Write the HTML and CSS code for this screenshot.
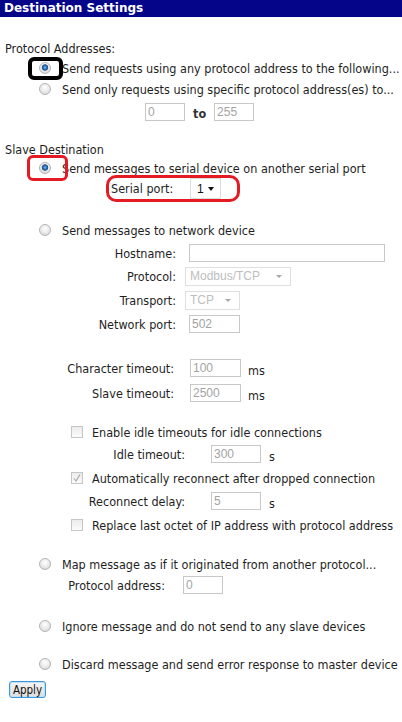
FILE: index.html
```html
<!DOCTYPE html>
<html lang="en">
<head>
    <meta charset="UTF-8">
    <meta name="viewport" content="width=device-width, initial-scale=1.0">
    <title>Destination Settings</title>
    <link rel="stylesheet" href="styles.css">
</head>
<body>
    <div class="titlebar">Destination Settings</div>

    <form class="settings">
        <!-- Protocol addresses -->
        <div class="row heading first">Protocol Addresses:</div>
        <label class="row opt flush">
            <input type="radio" name="addr" checked>
            <span>Send requests using any protocol address to the following...</span>
            <span class="mark mark-black"></span>
        </label>
        <label class="row opt near">
            <input type="radio" name="addr">
            <span>Send only requests using specific protocol address(es) to...</span>
        </label>
        <div class="row range">
            <input type="text" class="txt w40" value="0" disabled>
            <span class="to">to</span>
            <input type="text" class="txt w40" value="255" disabled>
        </div>

        <!-- Slave destination -->
        <div class="row heading second">Slave Destination</div>
        <label class="row opt flush">
            <input type="radio" name="dest" checked>
            <span>Send messages to serial device on another serial port</span>
            <span class="mark mark-red-radio"></span>
        </label>
        <div class="row field serial flush">
            <span class="lbl">Serial port:</span>
            <span class="select">
                <select class="sel-port"><option>1</option><option>2</option></select>
            </span>
            <span class="mark mark-red-port"></span>
        </div>

        <label class="row opt block">
            <input type="radio" name="dest">
            <span>Send messages to network device</span>
        </label>
        <div class="row field net">
            <span class="lbl">Hostname:</span>
            <input type="text" class="txt w196" value="">
        </div>
        <div class="row field net">
            <span class="lbl">Protocol:</span>
            <span class="select off">
                <select class="sel-proto" disabled><option>Modbus/TCP</option></select>
            </span>
        </div>
        <div class="row field net loose">
            <span class="lbl">Transport:</span>
            <span class="select off">
                <select class="sel-trans" disabled><option>TCP</option></select>
            </span>
        </div>
        <div class="row field net loose">
            <span class="lbl">Network port:</span>
            <input type="text" class="txt w51" value="502" disabled>
        </div>

        <div class="row field timeout wide">
            <span class="lbl">Character timeout:</span>
            <input type="text" class="txt w51" value="100" disabled>
            <span class="unit">ms</span>
        </div>
        <div class="row field timeout spread">
            <span class="lbl">Slave timeout:</span>
            <input type="text" class="txt w51" value="2500" disabled>
            <span class="unit">ms</span>
        </div>

        <label class="row check block-sm">
            <span class="box"></span>
            <span>Enable idle timeouts for idle connections</span>
        </label>
        <div class="row field idle tight">
            <span class="lbl">Idle timeout:</span>
            <input type="text" class="txt w50" value="300" disabled>
            <span class="unit">s</span>
        </div>
        <label class="row check loose">
            <span class="box ticked">
                <svg width="10" height="10" viewBox="0 0 10 10"><polyline points="2,5.5 4,8 8,1.5" fill="none" stroke="#a9a9a9" stroke-width="1.2"/></svg>
            </span>
            <span>Automatically reconnect after dropped connection</span>
        </label>
        <div class="row field idle">
            <span class="lbl">Reconnect delay:</span>
            <input type="text" class="txt w50" value="5" disabled>
            <span class="unit">s</span>
        </div>
        <label class="row check loose">
            <span class="box"></span>
            <span>Replace last octet of IP address with protocol address</span>
        </label>

        <label class="row opt block-sm">
            <input type="radio" name="dest">
            <span>Map message as if it originated from another protocol...</span>
        </label>
        <div class="row field mapped near">
            <span class="lbl">Protocol address:</span>
            <input type="text" class="txt w40" value="0" disabled>
        </div>

        <label class="row opt block">
            <input type="radio" name="dest">
            <span>Ignore message and do not send to any slave devices</span>
        </label>
        <label class="row opt block-md">
            <input type="radio" name="dest">
            <span>Discard message and send error response to master device</span>
        </label>

        <div class="actions">
            <button type="button" class="btn">Apply</button>
        </div>
    </form>
</body>
</html>
```

FILE: styles.css
```css
* {
    box-sizing: border-box;
}

html, body {
    margin: 0;
    padding: 0;
}

body {
    width: 402px;
    overflow: hidden;
    font-family: "DejaVu Sans", Verdana, sans-serif;
    font-stretch: condensed;
    font-size: 12.5px;
    color: #1e1e1e;
    background: white;
}

.titlebar {
    height: 17px;
    line-height: 17px;
    padding-left: 4px;
    background: #05058a;
    color: white;
    font-weight: bold;
    font-stretch: normal;
    font-size: 12px;
}

.settings {
    padding-left: 5px;
}

/* rows */
.row {
    position: relative;
    display: flex;
    align-items: center;
    height: 20px;
    margin-top: 3px;
    white-space: nowrap;
}

.row.flush { margin-top: 0; }
.row.near { margin-top: 1px; }
.row.tight { margin-top: 2px; }
.row.loose { margin-top: 4px; }
.row.spread { margin-top: 5px; }
.row.block-md { margin-top: 18px; }
.row.block-sm { margin-top: 19px; }
.row.block { margin-top: 21px; }
.row.wide { margin-top: 24px; }

.heading.first {
    margin-top: 21px;
}

.heading.second {
    height: 18px;
    margin-top: 18px;
}

/* radio options */
.opt {
    padding-left: 34px;
    gap: 11px;
}

.opt input[type="radio"] {
    appearance: none;
    -webkit-appearance: none;
    width: 12px;
    height: 12px;
    margin: 0;
    flex: none;
    border: 1px solid #b4b4b4;
    border-radius: 50%;
    background: radial-gradient(circle at 50% 35%, #ffffff 0, #e6e6e6 60%, #d2d2d2 100%);
}

.opt input[type="radio"]:checked {
    background:
        radial-gradient(circle at 50% 45%, #7fb8ec 0, #2f78c4 1.6px, #1b4c86 2.8px, rgba(27,76,134,0) 3.6px),
        radial-gradient(circle at 50% 35%, #ffffff 0, #e6e6e6 60%, #d2d2d2 100%);
}

/* check boxes */
.check {
    padding-left: 66px;
    gap: 9px;
}

.check .box {
    display: flex;
    align-items: center;
    justify-content: center;
    width: 12px;
    height: 12px;
    flex: none;
    border: 1px solid #c6c6c6;
    background: linear-gradient(#ececec, #fafafa);
}

/* labelled fields */
.field .lbl {
    text-align: right;
    flex: none;
}

.net .lbl { width: 171px; margin-right: 13px; }
.net .select { margin-left: -4px; }
.timeout .lbl { width: 169px; margin-right: 16px; }
.idle .lbl { width: 180px; margin-right: 26px; }
.mapped .lbl { width: 160px; margin-right: 18px; }
.serial { height: 21px; }
.serial .lbl { width: 62px; margin-left: 106px; margin-right: 17px; text-align: left; }

.unit {
    margin-left: 8px;
    padding-top: 4px;
}

.timeout .unit { margin-left: 7px; }

.range {
    padding-left: 140px;
}

.range .to {
    margin: 0 8px 0 8px;
    padding-top: 3px;
    font-weight: bold;
    color: #333;
}

/* inputs */
.txt {
    height: 18px;
    margin: 0;
    padding: 0 2px;
    border: 1px solid #c8c8c8;
    border-radius: 0;
    background: white;
    font-family: "Liberation Sans", Arial, sans-serif;
    font-size: 12px;
    color: #a3a3a3;
    outline: none;
}

.w40 { width: 40px; }
.w50 { width: 50px; }
.w51 { width: 51px; }
.w196 { width: 196px; }

.select {
    position: relative;
    display: inline-block;
}

.select select {
    appearance: none;
    -webkit-appearance: none;
    height: 19px;
    margin: 0;
    padding: 0 0 0 4px;
    border: 1px solid #d2d2d2;
    border-radius: 0;
    background: white;
    font-family: "Liberation Sans", Arial, sans-serif;
    font-size: 12px;
    color: #a3a3a3;
}

.select::after {
    content: "";
    position: absolute;
    right: 9px;
    top: 8px;
    border-left: 3px solid transparent;
    border-right: 3px solid transparent;
    border-top: 3px solid #a8a8a8;
    pointer-events: none;
}

.sel-proto { width: 106px; }
.sel-trans { width: 55px; }

.serial .select select {
    width: 31px;
    height: 21px;
    padding-left: 6px;
    border-color: #dcdcdc;
    color: #111;
}

.serial .select::after {
    right: 7px;
    top: 9px;
    border-top-color: #111;
    border-left-width: 3.5px;
    border-right-width: 3.5px;
    border-top-width: 4px;
}

/* hand-drawn highlight marks */
.mark {
    position: absolute;
    pointer-events: none;
}

.mark-black {
    left: 23px;
    top: -1px;
    width: 35px;
    height: 23px;
    border: 4px solid #000;
    border-radius: 6px;
}

.mark-red-radio {
    left: 22px;
    top: -3px;
    width: 41px;
    height: 26px;
    border: 3px solid #e41b23;
    border-radius: 6px;
}

.mark-red-port {
    left: 101px;
    top: -3px;
    width: 134px;
    height: 27px;
    border: 3px solid #e41b23;
    border-radius: 10px;
}

/* buttons */
.actions {
    margin-top: 7px;
    padding-left: 4px;
}

.btn {
    height: 17px;
    width: 37px;
    padding: 0;
    border: 1px solid #3d95dc;
    border-radius: 3px;
    background: linear-gradient(#f4f4f4, #dedede);
    font-family: "DejaVu Sans", Verdana, sans-serif;
    font-stretch: condensed;
    font-size: 11.5px;
    color: #111;
    box-shadow: inset 0 0 0 1px #bfe0f7;
}
```
